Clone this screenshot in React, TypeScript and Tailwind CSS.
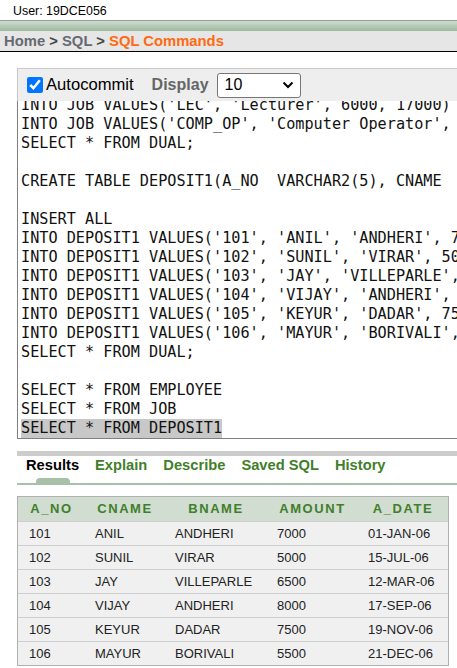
import React from "react";

const lines: string[] = [
  "INTO JOB VALUES('LEC', 'Lecturer', 6000, 17000)",
  "INTO JOB VALUES('COMP_OP', 'Computer Operator', 1500, 3000)",
  "SELECT * FROM DUAL;",
  "",
  "CREATE TABLE DEPOSIT1(A_NO  VARCHAR2(5), CNAME  VARCHAR2(15), BNAME  VARCHAR2(10), AMOUNT  NUMBER(7,2), A_DATE  DATE);",
  "",
  "INSERT ALL",
  "INTO DEPOSIT1 VALUES('101', 'ANIL', 'ANDHERI', 7000, '01-JAN-06')",
  "INTO DEPOSIT1 VALUES('102', 'SUNIL', 'VIRAR', 5000, '15-JUL-06')",
  "INTO DEPOSIT1 VALUES('103', 'JAY', 'VILLEPARLE', 6500, '12-MAR-06')",
  "INTO DEPOSIT1 VALUES('104', 'VIJAY', 'ANDHERI', 8000, '17-SEP-06')",
  "INTO DEPOSIT1 VALUES('105', 'KEYUR', 'DADAR', 7500, '19-NOV-06')",
  "INTO DEPOSIT1 VALUES('106', 'MAYUR', 'BORIVALI', 5500, '21-DEC-06')",
  "SELECT * FROM DUAL;",
  "",
  "SELECT * FROM EMPLOYEE",
  "SELECT * FROM JOB",
];

const rows = [
  ["101", "ANIL", "ANDHERI", "7000", "01-JAN-06"],
  ["102", "SUNIL", "VIRAR", "5000", "15-JUL-06"],
  ["103", "JAY", "VILLEPARLE", "6500", "12-MAR-06"],
  ["104", "VIJAY", "ANDHERI", "8000", "17-SEP-06"],
  ["105", "KEYUR", "DADAR", "7500", "19-NOV-06"],
  ["106", "MAYUR", "BORIVALI", "5500", "21-DEC-06"],
];

const headers = ["A_NO", "CNAME", "BNAME", "AMOUNT", "A_DATE"];

export default function App() {
  return (
    <div
      className="w-[457px] h-[668px] overflow-hidden bg-white"
      style={{ fontFamily: '"Liberation Sans", Arial, sans-serif' }}
    >
      <div className="h-[20px] pl-[13px] pt-[4px] text-[12.4px] leading-[14px] text-black">
        User: 19DCE056
      </div>
      <div className="h-[11px] border-t border-[#9a9a9a] bg-gradient-to-b from-[#cddccd] to-[#9fb99f]" />
      <div className="h-[21px] bg-[#e6e6e6] border-b border-black pl-[4px] text-[14.8px] font-bold leading-[20px] whitespace-nowrap">
        <span className="text-[#666a70]">Home</span>
        <span className="text-[#444]"> &gt; </span>
        <span className="text-[#666a70]">SQL</span>
        <span className="text-[#444]"> &gt; </span>
        <span className="text-[#ff6a10]">SQL Commands</span>
      </div>

      <div className="ml-[17px] mt-[16px]">
        <div className="h-[33px] border-t border-l border-[#c8c8c8] bg-[#eeeeee] flex items-center whitespace-nowrap">
          <input
            type="checkbox"
            defaultChecked
            className="ml-[9px] w-[16px] h-[16px] accent-[#0075ff] m-0"
          />
          <span className="ml-[3px] text-[16.6px] text-black">Autocommit</span>
          <span className="ml-[18px] text-[16px] font-bold text-[#666]">Display</span>
          <div className="ml-[8px] w-[84px] h-[25px] border border-[#767676] rounded-[3px] bg-white flex items-center justify-between pl-[7px] pr-[6px]">
            <span className="text-[16px] text-black">10</span>
            <svg width="12" height="8" viewBox="0 0 12 8">
              <path d="M1.5 1.5 L6 6 L10.5 1.5" fill="none" stroke="#000" strokeWidth="2" />
            </svg>
          </div>
        </div>

        <div className="h-[338px] border-l border-b border-[#808080] overflow-hidden bg-white">
          <div
            className="mt-[-5px] pl-[3px] text-[15.2px] leading-[19px] text-[#111] whitespace-pre"
            style={{ fontFamily: '"DejaVu Sans Mono", "Liberation Mono", monospace' }}
          >
            {lines.map((l, i) => (
              <div key={i} className="h-[19px]">
                {l}
              </div>
            ))}
            <div className="h-[19px]">
              <span className="bg-[#c8c8c8] inline-block h-[20px]">SELECT * FROM DEPOSIT1</span>
            </div>
          </div>
        </div>

        <div className="mt-[12px] h-[5px] bg-[#cccccc]" />
        <div className="h-[27px] flex items-start gap-[16px] pl-[9px] pt-[1px] text-[14.7px] font-bold leading-[16px] whitespace-nowrap">
          <div className="flex flex-col items-center">
            <span className="text-black">Results</span>
            <div className="mt-[5px] w-[34px] h-[5px] rounded-t-[4px] bg-[#a8bfa8]" />
          </div>
          <span className="text-[#3f7f2a]">Explain</span>
          <span className="text-[#3f7f2a]">Describe</span>
          <span className="text-[#3f7f2a]">Saved SQL</span>
          <span className="text-[#3f7f2a]">History</span>
        </div>
        <div className="h-[2px] bg-[#a8bfa8]" />

        <div className="mt-[11px] w-[432px] border border-[#b0b0b0]">
          <div className="grid grid-cols-[67px_80px_102px_91px_1fr] h-[24px] bg-[#d0ddd0] items-center">
            {headers.map((h) => (
              <div
                key={h}
                className="text-center text-[13px] font-bold tracking-[1.6px] text-[#3f7f2a]"
              >
                {h}
              </div>
            ))}
          </div>
          {rows.map((r, i) => (
            <div
              key={i}
              className="grid grid-cols-[67px_80px_102px_91px_1fr] h-[24px] bg-[#f0f0f0] border-t border-[#cfcfcf] items-center text-[13px] text-[#222]"
            >
              <div className="pl-[11px]">{r[0]}</div>
              <div className="pl-[10px]">{r[1]}</div>
              <div className="pl-[10px]">{r[2]}</div>
              <div className="pl-[10px]">{r[3]}</div>
              <div className="pl-[10px]">{r[4]}</div>
            </div>
          ))}
        </div>
      </div>
    </div>
  );
}
